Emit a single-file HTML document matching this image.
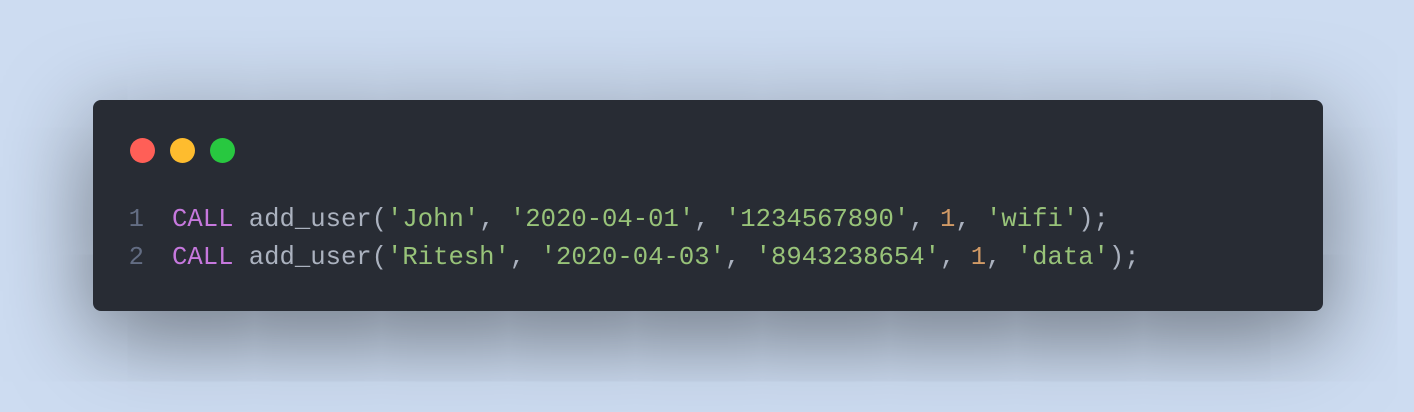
<!DOCTYPE html>
<html><head><style>
html,body{margin:0;padding:0;}
body{width:1414px;height:412px;background:#cddcf1;position:relative;overflow:hidden;}
.card{position:absolute;left:93px;top:100px;width:1230px;height:211px;background:#282c34;border-radius:8px;box-shadow:0 24px 90px rgba(0,0,0,0.5);}
.dot{position:absolute;top:138px;width:25px;height:25px;border-radius:50%;}
.code{position:absolute;left:0;top:201px;font-family:"Liberation Mono",monospace;font-size:25.6px;line-height:38px;color:#abb2bf;white-space:pre;}
.ln{display:inline-block;width:172px;text-align:right;box-sizing:border-box;padding-right:28px;color:#636d83;}
.k{color:#c678dd}.s{color:#98c379}.n{color:#d19a66}
</style></head><body>
<div class="card"></div>
<div class="dot" style="left:130px;background:#ff5f57"></div>
<div class="dot" style="left:170px;background:#febc2e"></div>
<div class="dot" style="left:210px;background:#28c840"></div>
<div class="code"><div><span class="ln">1</span><span class="k">CALL</span> add_user(<span class="s">'John'</span>, <span class="s">'2020-04-01'</span>, <span class="s">'1234567890'</span>, <span class="n">1</span>, <span class="s">'wifi'</span>);</div><div><span class="ln">2</span><span class="k">CALL</span> add_user(<span class="s">'Ritesh'</span>, <span class="s">'2020-04-03'</span>, <span class="s">'8943238654'</span>, <span class="n">1</span>, <span class="s">'data'</span>);</div></div>
</body></html>
